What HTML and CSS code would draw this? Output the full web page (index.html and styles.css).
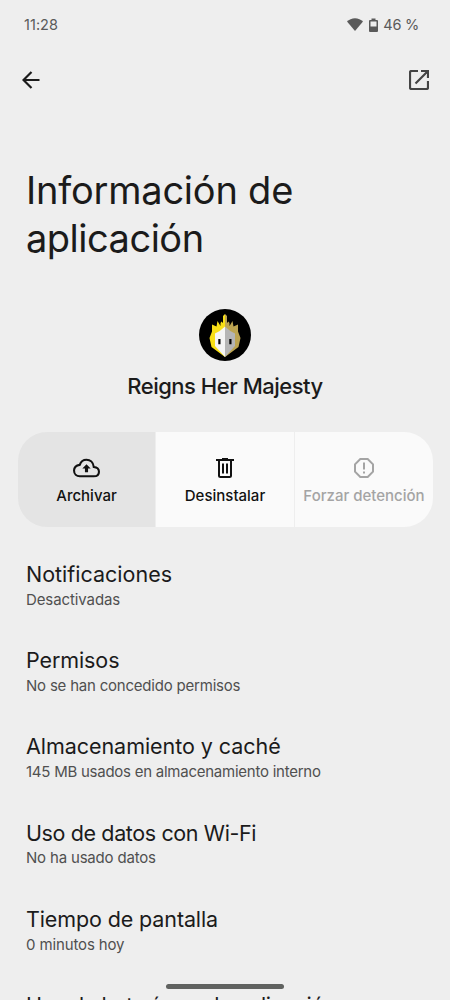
FILE: index.html
```html
<!DOCTYPE html>
<html lang="es">
<head>
<meta charset="utf-8">
<title>Información de aplicación</title>
<link rel="stylesheet" href="styles.css">
</head>
<body>
<div class="screen">
  <header class="status">
    <span class="time">11:28</span>
    <span class="indicators">
      <svg class="wifi" viewBox="0 0 16 13"><path d="M8 13 0 3.6C2 1.700 4.900.3 8 .3s6 1.400 8 3.300z"/></svg>
      <svg class="battery" viewBox="0 0 9 14"><path fill-rule="evenodd" d="M2.500.5h4V2H8q1 0 1 1v10q0 1-1 1H1q-1 0-1-1V3q0-1 1-1h1.500zM1.500 3.500v5h6v-5z"/></svg>
      <span class="charge">46 %</span>
    </span>
  </header>
  <nav class="toolbar">
    <svg class="back" viewBox="0 0 18 18"><path d="M17.500 9H2M9.500 1 1.500 9l8 8"/></svg>
    <svg class="open" viewBox="0 0 20 20"><path d="M9 1H2.500Q1 1 1 2.500v15Q1 19 2.500 19h15q1.500 0 1.500-1.500V11M12 1h7v7M19 1 6.500 13.500"/></svg>
  </nav>
  <h1 class="title"><span class="t1">Información de</span><br><span class="t2">aplicación</span></h1>
  <section class="app">
    <svg class="app-icon" viewBox="0 0 52 52">
      <circle cx="26" cy="26" r="26"/>
      <path fill="#f8df16" d="M26 5 24 7v7l-1.500-1.500-1 1.500v3L18.500 12l-1 5.500L13 15.500v7L10.500 29l2 9L26 48z"/>
      <path fill="#bca451" d="M26 5l2 2v7l1.500-1.500 1 1.500v3L33.500 12l1 5.500 4.500-2v7l2.500 6.500-2 9L26 48z"/>
      <path fill="#f5f5f5" d="M26 17.500q-5 5-10 7V37l10 11z"/>
      <path fill="#b5b5b5" d="M26 17.500q5 5 10 7V37L26 48z"/>
      <path d="M19.300 30h2.200v5.200h-2.200zM30.300 30h2.200v5.200h-2.200z"/>
    </svg>
    <h2 class="app-name">Reigns Her Majesty</h2>
  </section>
  <div class="actions">
    <div class="action pressed">
      <svg class="cloud" viewBox="0 0 26 18"><path class="line" d="M6.500 17H20q5 0 5-4.500 0-4-5-4.500C19.500 3.500 16.500 1 13 1 9.500 1 7.500 3 6.500 6 3 6.500 1 8.500 1 11.500 1 15 3.500 17 6.500 17z"/><path d="M13 5.500 17 9.500h-2.500V13h-3V9.500H9z"/></svg>
      <span>Archivar</span>
    </div>
    <div class="action">
      <svg class="trash" viewBox="0 0 18 20"><path class="line" d="M0 2h18M3 2v15.500Q3 19 4.500 19h9q1.500 0 1.500-1.500V2M7 5.500v10M11 5.500v10"/><path d="M6 0h6v2H6z"/></svg>
      <span>Desinstalar</span>
    </div>
    <div class="action disabled">
      <svg class="stop" viewBox="0 0 20 20"><path class="line" d="M6.300 1h7.400L19 6.300v7.400L13.700 19H6.300L1 13.700V6.300zM10 4.500v7M10 13.500v2"/></svg>
      <span>Forzar detención</span>
    </div>
  </div>
  <ul class="settings">
    <li><span class="name">Notificaciones</span><span class="detail d1">Desactivadas</span></li>
    <li><span class="name n2">Permisos</span><span class="detail d2">No se han concedido permisos</span></li>
    <li><span class="name n3">Almacenamiento y caché</span><span class="detail d3">145 MB usados en almacenamiento interno</span></li>
    <li><span class="name n4">Uso de datos con Wi-Fi</span><span class="detail d4">No ha usado datos</span></li>
    <li><span class="name n5">Tiempo de pantalla</span><span class="detail d5">0 minutos hoy</span></li>
    <li><span class="name n6">Uso de batería por la aplicación</span></li>
  </ul>
  <div class="home-bar"></div>
</div>
</body>
</html>
```

FILE: styles.css
```css
* { box-sizing: border-box; }
body { margin: 0; background: #eee; }
.screen {
  position: relative;
  width: 450px;
  height: 1000px;
  overflow: hidden;
  background: #eee;
  color: #1b1b1b;
  font-family: Inter, "Open Sans", sans-serif;
}
svg { display: block; }
.status {
  display: flex;
  justify-content: space-between;
  align-items: center;
  height: 48px;
  padding: 1px 31px 0 24px;
  color: #5a5a5a;
  font-size: 14.500px;
  line-height: 20px;
}
.time { letter-spacing: 0.050px; }
.charge { letter-spacing: -0.250px; }
.indicators { display: flex; align-items: center; }
.wifi { width: 16px; height: 13px; fill: #5a5a5a; }
.battery { width: 9px; height: 14px; margin: 0 5px 0 6px; fill: #5a5a5a; }
.toolbar {
  display: flex;
  justify-content: space-between;
  align-items: center;
  height: 64px;
  padding: 0 21px 0 22px;
}
.toolbar svg { fill: none; stroke-width: 2.200; }
.back { width: 18px; height: 18px; stroke: #1b1b1b; }
.open { width: 20px; height: 20px; stroke: #444; }
.title {
  margin: 0;
  padding: 53.500px 26px 0;
  height: 197px;
  font-size: 38px;
  font-weight: 400;
  line-height: 48.500px;
}
.t1 { letter-spacing: -0.220px; }
.t2 { letter-spacing: -0.5px; }
.app { display: flex; flex-direction: column; align-items: center; height: 123px; }
.app-icon { width: 52px; height: 52px; }
.app-name {
  margin: 11px 0 0;
  font-size: 22px;
  font-weight: 500;
  line-height: 28px;
  letter-spacing: -0.480px;
  white-space: nowrap;
}
.actions {
  display: grid;
  grid-template-columns: 137px 138px 138px;
  gap: 1px;
  width: 415px;
  height: 95px;
  margin-left: 18px;
  border-radius: 29px;
  overflow: hidden;
}
.action {
  display: flex;
  flex-direction: column;
  align-items: center;
  padding-top: 26px;
  background: #fafafa;
  color: #111;
  fill: #111;
  stroke: none;
  font-size: 15px;
  font-weight: 500;
  line-height: 20px;
  white-space: nowrap;
}
.action svg { height: 20px; }
.action span { margin-top: 8px; }
.line { fill: none; stroke: #111; stroke-width: 2; }
.pressed { background: #e4e4e4; }
.cloud { width: 27px; }
.trash { width: 18px; }
.stop { width: 20px; }
.disabled { color: #a4a4a4; }
.disabled .line { stroke: #a4a4a4; }
.settings { margin: 0; padding: 33px 26px 0; list-style: none; }
.settings li { display: flex; flex-direction: column; height: 86.200px; white-space: nowrap; }
.settings span { align-self: flex-start; }
.name { font-size: 21.500px; line-height: 28.500px; }
.detail { color: #505050; font-size: 15px; line-height: 20px; margin-top: 1.300px; }
.n2 { letter-spacing: -0.1px; }
.n3 { letter-spacing: -0.050px; }
.n4 { letter-spacing: -0.380px; }
.n5 { letter-spacing: -0.120px; }
.n6 { letter-spacing: -0.350px; }
.d1 { letter-spacing: -0.1px; }
.d2 { letter-spacing: -0.210px; }
.d3 { letter-spacing: -0.250px; }
.d4 { letter-spacing: -0.180px; }
.d5 { letter-spacing: -0.130px; }
.home-bar {
  position: absolute;
  left: 166px;
  top: 984px;
  width: 118px;
  height: 5px;
  border-radius: 3px;
  background: #606260;
}
```
